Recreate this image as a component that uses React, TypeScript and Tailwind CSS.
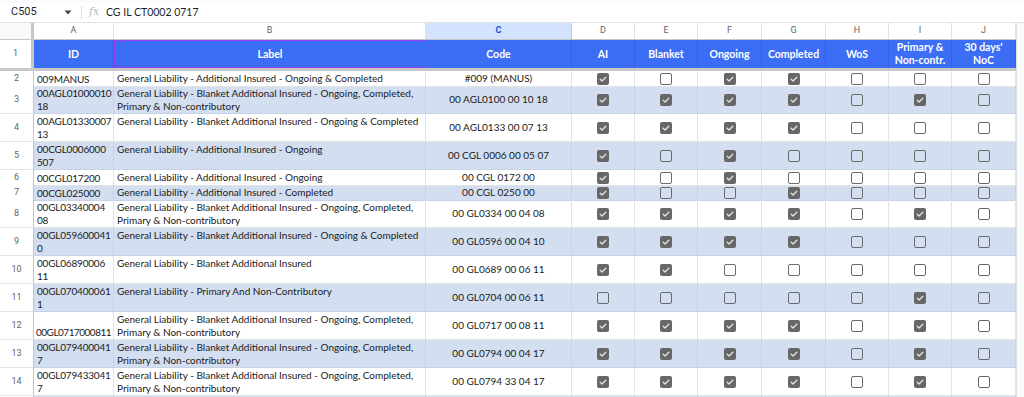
const COLS = "grid grid-cols-[34px_80px_312px_146px_63px_63px_64px_64px_63px_63px_64px]";

const L_BLANKET_OCP = "General Liability - Blanket Additional Insured - Ongoing, Completed,";
const L_PNC = "Primary & Non-contributory";
const L_BLANKET_OC = "General Liability - Blanket Additional Insured - Ongoing & Completed";

type Row = {
  n: number;
  tall: boolean;
  id: string[];
  label: string[];
  code: string;
  checks: number[];
  tight?: boolean;
};

const rows: Row[] = [
  { n: 2, tall: false, id: ["009MANUS"], label: ["General Liability - Additional Insured - Ongoing & Completed"], code: "#009 (MANUS)", checks: [1, 0, 1, 1, 0, 0, 0] },
  { n: 3, tall: true, id: ["00AGL01000010", "18"], label: [L_BLANKET_OCP, L_PNC], code: "00 AGL0100 00 10 18", checks: [1, 1, 1, 1, 0, 1, 0] },
  { n: 4, tall: true, id: ["00AGL01330007", "13"], label: [L_BLANKET_OC], code: "00 AGL0133 00 07 13", checks: [1, 1, 1, 1, 0, 0, 0] },
  { n: 5, tall: true, id: ["00CGL0006000", "507"], label: ["General Liability - Additional Insured - Ongoing"], code: "00 CGL 0006 00 05 07", checks: [1, 0, 1, 0, 0, 0, 0] },
  { n: 6, tall: false, id: ["00CGL017200"], label: ["General Liability - Additional Insured - Ongoing"], code: "00 CGL 0172 00", checks: [1, 0, 1, 0, 0, 0, 0] },
  { n: 7, tall: false, id: ["00CGL025000"], label: ["General Liability - Additional Insured - Completed"], code: "00 CGL 0250 00", checks: [1, 0, 0, 1, 0, 0, 0] },
  { n: 8, tall: true, id: ["00GL03340004", "08"], label: [L_BLANKET_OCP, L_PNC], code: "00 GL0334 00 04 08", checks: [1, 1, 1, 1, 0, 1, 0] },
  { n: 9, tall: true, id: ["00GL059600041", "0"], label: [L_BLANKET_OC], code: "00 GL0596 00 04 10", checks: [1, 1, 1, 1, 0, 0, 0] },
  { n: 10, tall: true, id: ["00GL06890006", "11"], label: ["General Liability - Blanket Additional Insured"], code: "00 GL0689 00 06 11", checks: [1, 1, 0, 0, 0, 0, 0] },
  { n: 11, tall: true, id: ["00GL070400061", "1"], label: ["General Liability - Primary And Non-Contributory"], code: "00 GL0704 00 06 11", checks: [0, 0, 0, 0, 0, 1, 0] },
  { n: 12, tall: true, id: ["00GL0717000811"], label: [L_BLANKET_OCP, L_PNC], code: "00 GL0717 00 08 11", checks: [1, 1, 1, 1, 0, 1, 0], tight: true },
  { n: 13, tall: true, id: ["00GL079400041", "7"], label: [L_BLANKET_OCP, L_PNC], code: "00 GL0794 00 04 17", checks: [1, 1, 1, 1, 0, 1, 0] },
  { n: 14, tall: true, id: ["00GL079433041", "7"], label: [L_BLANKET_OCP, L_PNC], code: "00 GL0794 33 04 17", checks: [1, 1, 1, 1, 0, 1, 0] },
  { n: 15, tall: true, id: [""], label: [""], code: "", checks: [1, 1, 1, 1, 0, 1, 0] },
];

const letters = ["A", "B", "C", "D", "E", "F", "G", "H", "I", "J"];

function Checkbox({ on }: { on: boolean }) {
  if (on) {
    return (
      <span className="w-3 h-3 rounded-[2px] bg-[#676767] flex items-center justify-center">
        <svg width="12" height="12" viewBox="0 0 12 12">
          <path d="M3.2 6.2 L5.1 8 L8.8 4.2" fill="none" stroke="#e4e4e4" strokeWidth="1.3" strokeLinecap="round" strokeLinejoin="round" />
        </svg>
      </span>
    );
  }
  return <span className="w-3 h-3 rounded-[2px] border-[1.5px] border-[#6a6a6a]" />;
}

function FormulaBar() {
  return (
    <div className="h-[20px] flex items-center bg-white border-b border-[#e1e3e1] font-['Roboto',sans-serif] text-[11px] text-[#1f1f1f]">
      <span className="pl-[11px] w-[62px]">C505</span>
      <svg width="8" height="5" viewBox="0 0 8 5" className="ml-[2px]">
        <path d="M0.5 0.5 L7.5 0.5 L4 4.5 Z" fill="#444746" />
      </svg>
      <span className="ml-[9px] w-px h-[13px] bg-[#dadce0]" />
      <span className="ml-[7px] w-[17px] font-['DejaVu_Serif',serif] italic text-[11px] text-[#b4b7ba]">fx</span>
      <span className="font-['Lato',sans-serif] text-[10.5px]">CG IL CT0002 0717</span>
    </div>
  );
}

function ColumnLetters() {
  return (
    <div className={`${COLS} h-[17px] bg-white border-b border-[#c4c7c5] font-['Roboto',sans-serif] text-[9px] text-[#5f6368]`}>
      <div className="bg-[#f8f9fa] border-r-[3px] border-[#c4c7c5]" />
      {letters.map((l) =>
        l === "C" ? (
          <div key={l} className="flex items-center justify-center bg-[#d3e3fd] border-r border-[#c4c7c5] font-bold text-[#0b57d0]">
            {l}
          </div>
        ) : (
          <div key={l} className="flex items-center justify-center border-r border-[#e1e1e1] text-[#5f6368]">
            {l}
          </div>
        )
      )}
    </div>
  );
}

function HeaderRow() {
  const heads: string[][] = [
    ["ID"],
    ["Label"],
    ["Code"],
    ["AI"],
    ["Blanket"],
    ["Ongoing"],
    ["Completed"],
    ["WoS"],
    ["Primary &", "Non-contr."],
    ["30 days'", "NoC"],
  ];
  return (
    <div className={`${COLS} h-[28px]`}>
      <div className="bg-white border-r-[3px] border-[#c4c7c5] flex items-center justify-center font-['Roboto',sans-serif] text-[9px] text-[#5f6368]">
        1
      </div>
      {heads.map((h, i) => (
        <div
          key={i}
          className={
            i === 1
              ? "bg-[#3b6ef4] ring-1 ring-inset ring-[#9a3ee8] flex flex-col items-center justify-center text-white font-bold text-[10.5px] leading-[13px]"
              : "bg-[#3b6ef4] border-r border-[#3562dc] flex flex-col items-center justify-center text-white font-bold text-[10.5px] leading-[13px] text-center"
          }
        >
          {h.map((t) => (
            <span key={t}>{t}</span>
          ))}
        </div>
      ))}
    </div>
  );
}

function DataRow({ r }: { r: Row }) {
  const blue = r.n % 2 === 1;
  const grid = blue ? "border-[#c6d2e5]" : "border-[#e2e3e3]";
  const cell = `border-r border-b ${grid}`;
  return (
    <div className={`${COLS} ${r.tall ? "h-[28px]" : "h-[15px]"} ${blue ? "bg-[#d3dff1]" : "bg-white"}`}>
      <div className="bg-white border-r border-b border-r-[#c4c7c5] border-b-[#e2e3e3] flex items-center justify-center font-['Roboto',sans-serif] text-[9px] text-[#5f6368]">
        {r.n}
      </div>
      <div
        className={`${cell} flex flex-col justify-end leading-[13px] overflow-hidden ${
          r.tight ? "px-[2px] tracking-[-0.5px]" : "px-[3px] tracking-[-0.2px]"
        }`}
      >
        {r.id.map((t, i) => (
          <span key={i} className="whitespace-nowrap">{t}</span>
        ))}
      </div>
      <div className={`${cell} px-[3px] pt-px flex flex-col justify-start leading-[13px] overflow-hidden`}>
        {r.label.map((t, i) => (
          <span key={i} className="whitespace-nowrap">{t}</span>
        ))}
      </div>
      <div className={`${cell} flex items-center justify-center whitespace-nowrap`}>{r.code}</div>
      {r.checks.map((c, i) => (
        <div key={i} className={`${cell} flex items-center justify-center`}>
          <Checkbox on={c === 1} />
        </div>
      ))}
    </div>
  );
}

export default function App() {
  return (
    <div className="w-[1024px] h-[397px] overflow-hidden bg-white font-['Lato',sans-serif] text-[10px] text-[#1a1a1a]">
      <div className="h-[3px] bg-[#f9fbfd]" />
      <FormulaBar />
      <div className="flex">
        <div className="w-[1016px]">
          <ColumnLetters />
          <HeaderRow />
          <div className="h-[3px] bg-[#c8c8c8]" />
          {rows.map((r) => (
            <DataRow key={r.n} r={r} />
          ))}
        </div>
        <div className="flex-1 bg-[#f8f9fa] border-l border-[#e1e1e1]" />
      </div>
    </div>
  );
}
